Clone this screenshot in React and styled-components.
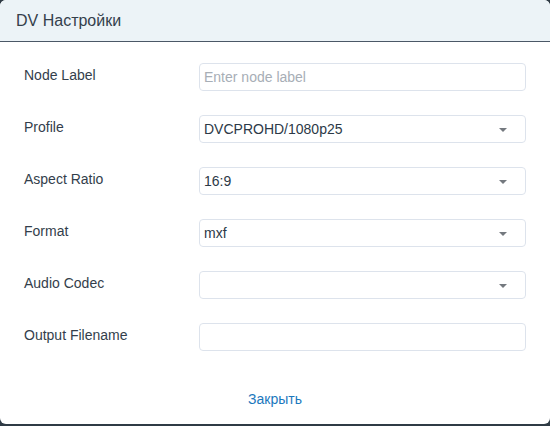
import React from "react";
import styled, { createGlobalStyle } from "styled-components";

const font = `"Liberation Sans", Arial, sans-serif`;

const GlobalStyle = createGlobalStyle`
  html, body {
    margin: 0;
    padding: 0;
    background: #2f3b45;
  }
  body {
    font-family: ${font};
  }
`;

const fields = [
  { label: "Node Label", type: "input", placeholder: "Enter node label" },
  { label: "Profile", type: "select", value: "DVCPROHD/1080p25" },
  { label: "Aspect Ratio", type: "select", value: "16:9" },
  { label: "Format", type: "select", value: "mxf" },
  { label: "Audio Codec", type: "select", value: "" },
  { label: "Output Filename", type: "input", placeholder: "" },
];

function App() {
  return (
    <>
      <GlobalStyle />
      <Dialog>
        <Header>DV Настройки</Header>
        <Form>
          {fields.map((f) => (
            <Row key={f.label}>
              <Label>{f.label}</Label>
              {f.type === "input" ? (
                <TextInput placeholder={f.placeholder} />
              ) : (
                <Select>
                  <span>{f.value}</span>
                  <Caret />
                </Select>
              )}
            </Row>
          ))}
        </Form>
        <Footer>
          <CloseButton>Закрыть</CloseButton>
        </Footer>
      </Dialog>
    </>
  );
}

export default App;

const Dialog = styled.div`
  width: 550px;
  height: 424px;
  background: #fff;
  border-radius: 6px;
  overflow: hidden;
  display: flex;
  flex-direction: column;
`;

const Header = styled.div`
  height: 41px;
  flex: none;
  display: flex;
  align-items: center;
  padding: 0 16px;
  background: #ecf3f7;
  border-bottom: 1px solid #4b5866;
  color: #34404c;
  font-size: 16px;
`;

const Form = styled.div`
  display: flex;
  flex-direction: column;
  gap: 24px;
  padding: 21px 24px 0 24px;
`;

const Row = styled.div`
  display: grid;
  grid-template-columns: 175px 1fr;
  align-items: center;
  height: 28px;
`;

const Label = styled.div`
  font-size: 14px;
  color: #333e4b;
  margin-top: -5px;
`;

const fieldBase = `
  box-sizing: border-box;
  height: 28px;
  width: 100%;
  border: 1px solid #dde3ec;
  border-radius: 4px;
  background: #fff;
  font-family: ${font};
  font-size: 14px;
  color: #2c3947;
  padding: 0 4px;
`;

const TextInput = styled.input`
  ${fieldBase}
  outline: none;
  &::placeholder {
    color: #a7aeb6;
  }
`;

const Select = styled.div`
  ${fieldBase}
  display: flex;
  align-items: center;
  justify-content: space-between;
  padding-right: 18px;
`;

const Caret = styled.span`
  width: 0;
  height: 0;
  border-left: 4px solid transparent;
  border-right: 4px solid transparent;
  border-top: 4px solid #74797f;
  margin-top: 1px;
`;

const Footer = styled.div`
  flex: 1;
  display: flex;
  align-items: center;
  justify-content: center;
  padding-top: 22px;
`;

const CloseButton = styled.button`
  border: none;
  background: none;
  font-family: ${font};
  font-size: 14px;
  color: #1b78bd;
  padding: 8px 16px;
  cursor: pointer;
`;
